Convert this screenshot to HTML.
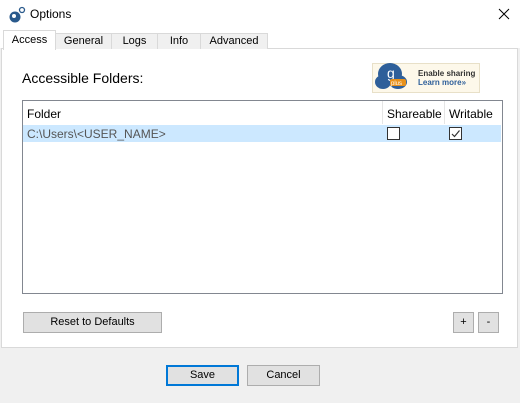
<!DOCTYPE html>
<html><head><style>
*{box-sizing:border-box;margin:0;padding:0}
body{width:520px;height:403px;background:#f0f0f0;font-family:"Liberation Sans",sans-serif;font-size:11px;color:#000;position:relative;overflow:hidden}
.a{position:absolute}
.btn{position:absolute;background:#e1e1e1;border:1px solid #adadad;text-align:center;font-size:11px;line-height:19px}
.tab{position:absolute;top:33px;height:16px;background:#f0f0f0;border:1px solid #d9d9d9;border-bottom:none;text-align:center;font-size:11px;line-height:14px}
</style></head><body>
<div class="a" style="left:0;top:0;width:520px;height:48px;background:#fff"></div>
<svg class="a" style="left:8px;top:6px" width="18" height="18" viewBox="0 0 18 18"><circle cx="7" cy="11" r="5.5" fill="#2a5a8c"/><circle cx="6" cy="10" r="2" fill="#fff"/><circle cx="14" cy="4" r="2.5" fill="none" stroke="#2a5a8c" stroke-width="1.3"/></svg>
<div class="a" style="left:30px;top:7px;font-size:12px">Options</div>
<svg class="a" style="left:498px;top:8px" width="12" height="12"><path d="M1 1 L11 11 M11 1 L1 11" stroke="#000" stroke-width="1"/></svg>
<div class="a" style="left:1px;top:48px;width:517px;height:300px;background:#fff;border:1px solid #d9d9d9"></div>
<div class="tab" style="left:55px;width:57px">General</div>
<div class="tab" style="left:111px;width:47px">Logs</div>
<div class="tab" style="left:157px;width:44px">Info</div>
<div class="tab" style="left:200px;width:68px">Advanced</div>
<div class="a" style="left:3px;top:30px;width:53px;height:20px;background:#fff;border:1px solid #d9d9d9;border-bottom:none;text-align:center;line-height:18px">Access</div>
<div class="a" style="left:22px;top:70px;font-size:14px">Accessible Folders:</div>
<div class="a" style="left:372px;top:63px;width:108px;height:30px;background:#fdf8ea;border:1px solid #e8e0c8"></div>
<svg class="a" style="left:374px;top:60px" width="36" height="36" viewBox="0 0 36 36"><ellipse cx="16" cy="14" rx="12" ry="11" fill="#2e5f9a"/><ellipse cx="24" cy="22" rx="9" ry="7" fill="#2e5f9a"/><ellipse cx="9" cy="22" rx="8" ry="7" fill="#2e5f9a"/><text x="13" y="18" fill="#fff" font-size="14" font-family="Liberation Sans">g</text><rect x="16" y="19" width="16" height="7" rx="2" fill="#e8911a"/><text x="17" y="25" fill="#fff" font-size="6" font-family="Liberation Sans">plus</text></svg>
<div class="a" style="left:418px;top:69px;font-size:8px;font-weight:bold;color:#333;line-height:9px">Enable sharing<br><span style="color:#2e5f9a">Learn more»</span></div>
<div class="a" style="left:22px;top:100px;width:481px;height:194px;background:#fff;border:1px solid #828790"></div>
<div class="a" style="left:382px;top:101px;width:1px;height:23px;background:#e5e5e5"></div>
<div class="a" style="left:444px;top:101px;width:1px;height:23px;background:#e5e5e5"></div>
<div class="a" style="left:27px;top:107px;font-size:12px">Folder</div>
<div class="a" style="left:387px;top:107px;font-size:12px">Shareable</div>
<div class="a" style="left:449px;top:107px;font-size:12px">Writable</div>
<div class="a" style="left:23px;top:125px;width:478px;height:17px;background:#cce8ff"></div>
<div class="a" style="left:27px;top:127px;font-size:12px;color:#555">C:\Users\&lt;USER_NAME&gt;</div>
<div class="a" style="left:387px;top:127px;width:13px;height:13px;border:1px solid #333;background:#fff"></div>
<div class="a" style="left:449px;top:127px;width:13px;height:13px;border:1px solid #333;background:#fff"></div>
<svg class="a" style="left:450px;top:128px" width="11" height="11"><path d="M2 6 L4.5 8.5 L9.5 2.5" fill="none" stroke="#333" stroke-width="1.2"/></svg>
<div class="btn" style="left:23px;top:312px;width:139px;height:21px">Reset to Defaults</div>
<div class="btn" style="left:453px;top:312px;width:21px;height:21px">+</div>
<div class="btn" style="left:478px;top:312px;width:21px;height:21px">-</div>
<div class="btn" style="left:166px;top:365px;width:73px;height:21px;border:2px solid #0078d7;line-height:17px">Save</div>
<div class="btn" style="left:247px;top:365px;width:73px;height:21px">Cancel</div>
</body></html>
